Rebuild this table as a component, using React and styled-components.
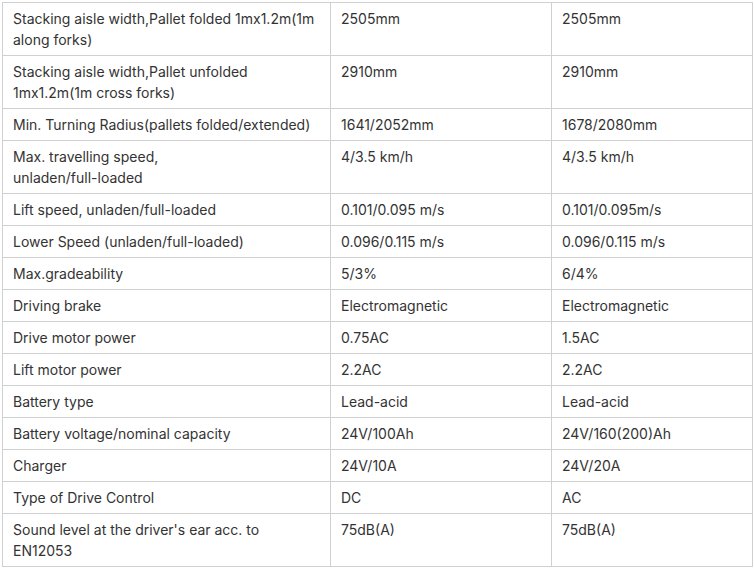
import React from 'react'
import styled, { createGlobalStyle } from 'styled-components'

const GlobalStyle = createGlobalStyle`
  body {
    margin: 0;
    background: #fff;
    font-family: Inter, "Noto Sans", sans-serif;
  }
`

// \n marks a forced line break from the source
const specs = [
  ['Stacking aisle width,Pallet folded 1mx1.2m(1m along forks)', '2505mm', '2505mm'],
  ['Stacking aisle width,Pallet unfolded 1mx1.2m(1m cross forks)', '2910mm', '2910mm'],
  ['Min. Turning Radius(pallets folded/extended)', '1641/2052mm', '1678/2080mm'],
  ['Max. travelling speed,\nunladen/full-loaded', '4/3.5 km/h', '4/3.5 km/h'],
  ['Lift speed, unladen/full-loaded', '0.101/0.095 m/s', '0.101/0.095m/s'],
  ['Lower Speed (unladen/full-loaded)', '0.096/0.115 m/s', '0.096/0.115 m/s'],
  ['Max.gradeability', '5/3%', '6/4%'],
  ['Driving brake', 'Electromagnetic', 'Electromagnetic'],
  ['Drive motor power', '0.75AC', '1.5AC'],
  ['Lift motor power', '2.2AC', '2.2AC'],
  ['Battery type', 'Lead-acid', 'Lead-acid'],
  ['Battery voltage/nominal capacity', '24V/100Ah', '24V/160(200)Ah'],
  ['Charger', '24V/10A', '24V/20A'],
  ['Type of Drive Control', 'DC', 'AC'],
  ["Sound level at the driver's ear acc. to EN12053", '75dB(A)', '75dB(A)']
]

const Page = styled.div`
  padding: 2px;
`

const Table = styled.table`
  width: 750px;
  table-layout: fixed;
  border-collapse: collapse;
`

const Col = styled.col`
  width: ${p => p.$w}px;
`

const Cell = styled.td`
  border: 1px solid #d0d0d0;
  padding: 5px 10px;
  font-size: 14px;
  line-height: 21px;
  color: #333;
  vertical-align: top;
  white-space: pre-line;
`

export default function App () {
  return (
    <Page>
      <GlobalStyle />
      <Table>
        <colgroup>
          <Col $w={328} />
          <Col $w={221} />
          <Col $w={201} />
        </colgroup>
        <tbody>
          {specs.map(row => (
            <tr key={row[0]}>
              {row.map((v, i) => <Cell key={i}>{v}</Cell>)}
            </tr>
          ))}
        </tbody>
      </Table>
    </Page>
  )
}
